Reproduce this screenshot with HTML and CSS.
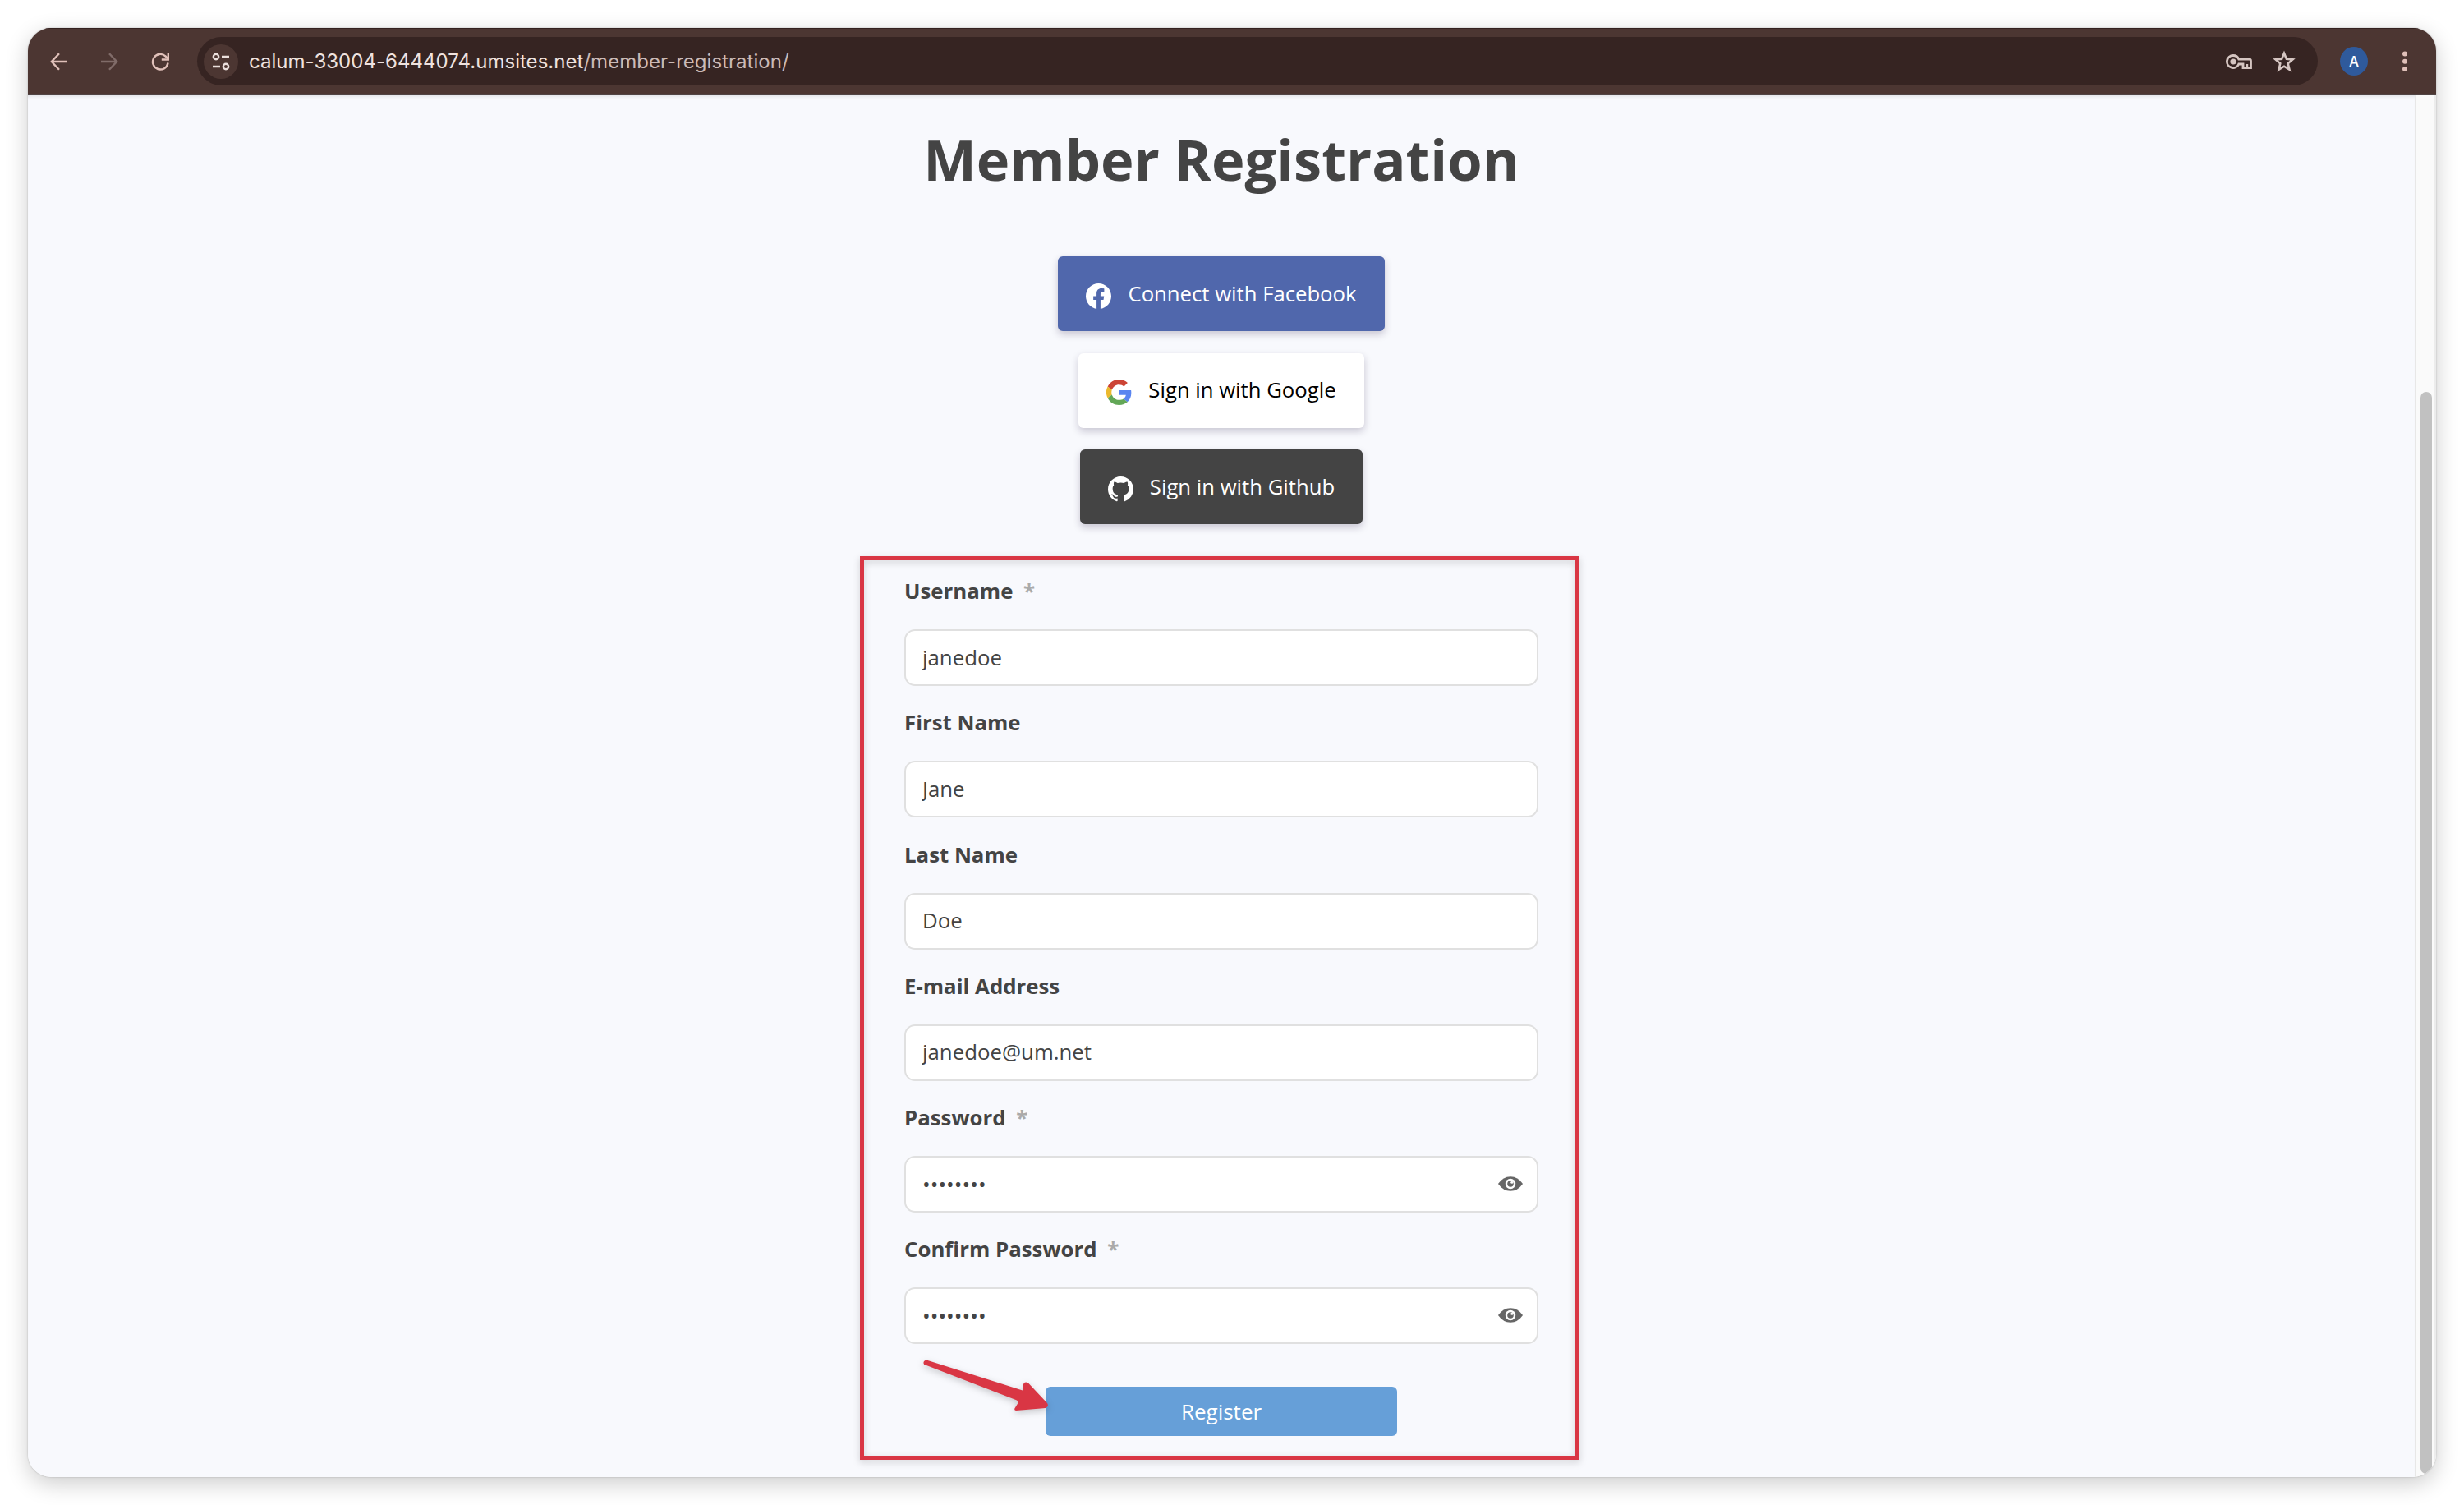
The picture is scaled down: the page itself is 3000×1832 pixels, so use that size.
FILE: index.html
```html
<!DOCTYPE html>
<html lang="en">
<head>
    <meta charset="UTF-8">
    <title>Member Registration</title>
    <link rel="stylesheet" href="styles.css">
</head>
<body>

    <div class="window">
        <header class="toolbar">
            <svg class="icon-back" viewBox="0 0 24 24" width="24" height="24"><path d="M22 12H3M12 2.2L2.8 12l9.2 9.8"/></svg>
            <svg class="icon-forward" viewBox="0 0 24 24" width="24" height="24"><path d="M2 12h19M12 2.2l9.2 9.8-9.2 9.8"/></svg>
            <svg class="icon-reload" viewBox="0 0 24 24" width="24" height="24"><path d="M21.5 13.5a9.3 9.3 0 1 1-3-8.2l3 3"/><path d="M21.8 1.5v8h-8"/></svg>
            <div class="address-bar">
                <span class="site-info">
                    <svg viewBox="0 0 24 24" width="24" height="24"><circle cx="6" cy="6" r="3.2"/><path d="M13 6h9M2 18h9"/><circle cx="18" cy="18" r="3.2"/></svg>
                </span>
                <span class="url">calum-33004-6444074.umsites.net<span class="path">/member-registration/</span></span>
                <svg class="icon-key" viewBox="0 0 32 18" width="32" height="18"><path d="M9 1.5a7.5 7.5 0 1 0 6.8 10.5H21v4.5h9.5V8q0-2-2-2H15.8A7.5 7.5 0 0 0 9 1.5zM25.8 16v-4"/><circle cx="9" cy="9" r="3.6"/></svg>
                <svg class="icon-star" viewBox="0 0 28 28" width="28" height="28"><path d="M14 3.8l2.900 7 7.600.600-5.800 4.900 1.800 7.400-6.500-4-6.500 4 1.800-7.400-5.800-4.900 7.600-.600z"/></svg>
            </div>
            <span class="avatar">A</span>
            <svg class="icon-menu" viewBox="0 0 6 26" width="6" height="26"><circle cx="3" cy="3.5" r="3"/><circle cx="3" cy="12.7" r="3"/><circle cx="3" cy="22" r="3"/></svg>
        </header>

        <div class="viewport">
            <main class="page">
                <h1>Member Registration</h1>

                <div class="social">
                    <button type="button" class="social-button facebook">
                        <svg viewBox="0 0 24 24" width="31" height="31"><path fill="#fff" d="M24 12.07C24 5.4 18.63 0 12 0S0 5.4 0 12.07C0 18.1 4.39 23.1 10.13 24v-8.44H7.08v-3.49h3.05V9.41c0-3.02 1.79-4.7 4.53-4.7 1.31 0 2.68.24 2.68.24v2.97h-1.51c-1.49 0-1.96.93-1.96 1.89v2.26h3.33l-.53 3.49h-2.8V24C19.61 23.1 24 18.1 24 12.07z"/></svg>
                        <span>Connect with Facebook</span>
                    </button>
                    <button type="button" class="social-button google">
                        <svg viewBox="0 0 48 48" width="31" height="31"><path fill="#cc4435" d="M24 9.5c3.5 0 6.7 1.2 9.2 3.6l6.9-6.9C35.9 2.4 30.5 0 24 0 14.6 0 6.5 5.4 2.6 13.2l8 6.2C12.4 13.7 17.7 9.5 24 9.5z"/><path fill="#5a85f0" d="M47 24.6c0-1.6-.2-3.1-.4-4.6H24v9h12.9c-.6 3-2.3 5.5-4.8 7.2l7.7 6C44.4 38 47 31.9 47 24.6z"/><path fill="#ebb92d" d="M10.5 28.6a14.5 14.5 0 0 1 0-9.2l-8-6.2a24 24 0 0 0 0 21.6z"/><path fill="#63a757" d="M24 48c6.5 0 11.9-2.1 15.9-5.8l-7.7-6c-2.2 1.5-5 2.3-8.2 2.3-6.3 0-11.6-4.2-13.5-9.9l-8 6.2C6.5 42.6 14.6 48 24 48z"/></svg>
                        <span>Sign in with Google</span>
                    </button>
                    <button type="button" class="social-button github">
                        <svg viewBox="0 0 16 16" width="31" height="31"><path fill="#fff" d="M8 0C3.58 0 0 3.58 0 8c0 3.54 2.29 6.53 5.47 7.59.4.07.55-.17.55-.38 0-.19-.01-.82-.01-1.49-2.01.37-2.53-.49-2.69-.94-.09-.23-.48-.94-.82-1.13-.28-.15-.68-.52-.01-.53.63-.01 1.08.58 1.23.82.72 1.21 1.87.87 2.33.66.07-.52.28-.87.51-1.07-1.78-.2-3.64-.89-3.64-3.95 0-.87.31-1.59.82-2.15-.08-.2-.36-1.02.08-2.12 0 0 .67-.21 2.2.82.64-.18 1.32-.27 2-.27s1.36.09 2 .27c1.53-1.04 2.2-.82 2.2-.82.44 1.1.16 1.92.08 2.12.51.56.82 1.27.82 2.15 0 3.07-1.87 3.75-3.65 3.95.29.25.54.73.54 1.48 0 1.07-.01 1.93-.01 2.2 0 .21.15.46.55.38A8.01 8.01 0 0 0 16 8c0-4.42-3.58-8-8-8z"/></svg>
                        <span>Sign in with Github</span>
                    </button>
                </div>

                <form class="register-form">
                    <div class="field">
                        <label for="username">Username <span class="req">*</span></label>
                        <input type="text" id="username" value="janedoe">
                    </div>
                    <div class="field">
                        <label for="first_name">First Name</label>
                        <input type="text" id="first_name" value="Jane">
                    </div>
                    <div class="field">
                        <label for="last_name">Last Name</label>
                        <input type="text" id="last_name" value="Doe">
                    </div>
                    <div class="field">
                        <label for="email">E-mail Address</label>
                        <input type="text" id="email" value="janedoe@um.net">
                    </div>
                    <div class="field">
                        <label for="password">Password <span class="req">*</span></label>
                        <div class="password-box">
                            <input type="password" id="password" value="password">
                            <svg class="icon-eye" viewBox="0 0 30 18" width="30" height="18"><path fill="#666" d="M0 9Q6 .3 15 .3T30 9q-6 8.700-15 8.700T0 9z"/><circle cx="15" cy="9" r="6.200" fill="#fff"/><circle cx="15" cy="9" r="3.800" fill="#666"/><circle cx="16.800" cy="7.300" r="1.500" fill="#fff"/></svg>
                        </div>
                    </div>
                    <div class="field">
                        <label for="confirm">Confirm Password <span class="req">*</span></label>
                        <div class="password-box">
                            <input type="password" id="confirm" value="password">
                            <svg class="icon-eye" viewBox="0 0 30 18" width="30" height="18"><path fill="#666" d="M0 9Q6 .3 15 .3T30 9q-6 8.700-15 8.700T0 9z"/><circle cx="15" cy="9" r="6.200" fill="#fff"/><circle cx="15" cy="9" r="3.800" fill="#666"/><circle cx="16.800" cy="7.300" r="1.500" fill="#fff"/></svg>
                        </div>
                    </div>
                    <button type="button" class="register-button">Register</button>

                    <div class="highlight"></div>
                    <svg class="arrow" viewBox="0 0 160 70" width="160" height="70"><path d="M8 7Q5 7.500 4.500 4.500T8 .5L125 37.500 126 30Q127.500 26 132 28.500L155 53Q157.500 57 153 59L117 62Q114 61.500 116 58.500L120 52 118 49.500z"/></svg>
                </form>
            </main>
            <div class="scrollbar"><div class="thumb"></div></div>
        </div>
    </div>

</body>
</html>
```
FILE: styles.css
```css
* {
    box-sizing: border-box;
}
body {
    margin: 0;
    padding: 34px;
    height: 1832px;
    background-color: #fff;
    font-family: 'Open Sans', sans-serif;
    font-size: 25.8px;
    color: #444;
    overflow: hidden;
}
.window {
    display: flex;
    flex-direction: column;
    height: 1764px;
    border-radius: 28px;
    overflow: hidden;
    box-shadow: 0 0 2px rgba(0, 0, 0, 0.25), 0 8px 28px rgba(0, 0, 0, 0.2);
}
/* Browser bar */
.toolbar {
    display: flex;
    align-items: center;
    height: 82px;
    padding: 0 35px 0 26px;
    background-color: #4c3632;
    border-top: 1px solid #33211f;
    border-bottom: 2px solid #514545;
}
.toolbar svg {
    flex: none;
    fill: none;
    stroke: #e0c0b9;
    stroke-width: 2.4;
}
.toolbar .icon-forward {
    margin-left: 37px;
    stroke: #806c69;
}
.toolbar .icon-reload {
    margin-left: 38px;
}
.address-bar {
    display: flex;
    align-items: center;
    flex: 1;
    height: 59px;
    margin-left: 33px;
    padding: 0 27px 0 8px;
    border-radius: 30px;
    background-color: #362422;
}
.site-info {
    display: flex;
    align-items: center;
    justify-content: center;
    width: 42px;
    height: 42px;
    border-radius: 50%;
    background-color: #4c3632;
}
.toolbar .site-info svg {
    stroke: #eadfdc;
}
.url {
    flex: 1;
    margin-left: 13px;
    font-family: Inter, sans-serif;
    font-size: 24px;
    letter-spacing: 0.03px;
    color: #efe2df;
    white-space: nowrap;
}
.path {
    color: #cbbab7;
}
.toolbar .icon-key,
.toolbar .icon-star {
    stroke: #d5c5c1;
    stroke-width: 2.8;
}
.icon-key circle {
    fill: #d5c5c1;
    stroke: none;
}
.toolbar .icon-star {
    margin-left: 25px;
    stroke-width: 2.6;
}
.avatar {
    display: flex;
    align-items: center;
    justify-content: center;
    width: 34px;
    height: 35px;
    margin-left: 27px;
    border-radius: 50%;
    background-color: #2f5a9c;
    font-family: Inter, sans-serif;
    font-size: 17px;
    font-weight: 500;
    color: #fff;
}
.toolbar .icon-menu {
    margin-left: 42px;
    fill: #e0c0b9;
    stroke: none;
}
/* Page */
.viewport {
    display: flex;
    flex: 1;
    min-height: 0;
}
.page {
    flex: 1;
    padding-top: 33px;
    background-color: #f8f9fd;
    box-shadow: inset 0 5px 5px -4px rgba(0, 0, 0, 0.12);
}
.scrollbar {
    width: 26px;
    padding: 361px 3px 4px 5px;
    background-color: #fafafa;
    border-left: 2px solid #e7e7e7;
    border-right: 2px solid #ececec;
}
.thumb {
    width: 14px;
    height: 100%;
    border-radius: 7px;
    background-color: #c1c1c1;
}
h1 {
    margin: 0 0 73px;
    font-size: 68.6px;
    line-height: 90px;
    font-weight: 700;
    text-align: center;
}
.social {
    display: flex;
    flex-direction: column;
    align-items: center;
    gap: 26.5px;
}
.social-button {
    display: flex;
    align-items: center;
    height: 91px;
    padding: 0 34px;
    border: none;
    border-radius: 6px;
    font-family: inherit;
    font-size: 25.7px;
    box-shadow: 0 4px 10px rgba(30, 20, 60, 0.22);
}
.social-button svg {
    margin-top: 5px;
    margin-right: 20px;
}
.social-button span {
    margin-bottom: 1px;
}
.facebook {
    background-color: #5067ac;
    color: #fff;
}
.google {
    background-color: #fff;
    color: #000;
}
.github {
    background-color: #444;
    color: #fff;
}
/* Form */
.register-form {
    position: relative;
    width: 772px;
    margin: 61px auto 0;
}
.field {
    height: 160.3px;
}
label {
    display: block;
    margin-bottom: 27px;
    line-height: 40px;
    font-weight: 700;
}
.req {
    margin-left: 6px;
    color: #aaa;
}
input {
    display: block;
    width: 100%;
    height: 69px;
    padding: 0 20px 2px;
    border: 2px solid #e0e0e0;
    border-radius: 13px;
    background-color: #fff;
    font-family: inherit;
    font-size: 25.8px;
    color: #444;
}
.password-box {
    position: relative;
}
.icon-eye {
    position: absolute;
    right: 19px;
    top: 25px;
}
.register-button {
    display: block;
    width: 428px;
    height: 60px;
    margin: 27px auto 0;
    border: none;
    border-radius: 6px;
    background-color: #669fd8;
    font-family: inherit;
    font-size: 26px;
    color: #fff;
}
/* Red frame and arrow drawn over the form */
.highlight {
    position: absolute;
    left: -54px;
    top: -22px;
    width: 876px;
    height: 1100px;
    border: 5px solid #d93644;
    filter: drop-shadow(0 3px 4px rgba(0, 0, 0, 0.18));
    pointer-events: none;
}
.arrow {
    position: absolute;
    left: 19px;
    top: 956px;
    fill: #d93644;
    overflow: visible;
    filter: drop-shadow(0 3px 4px rgba(0, 0, 0, 0.2));
}
```
